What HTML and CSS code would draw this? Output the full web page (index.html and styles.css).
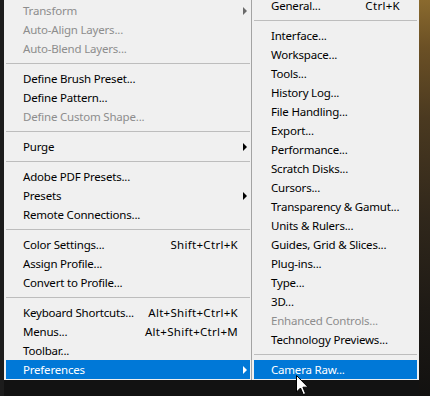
FILE: index.html
```html
<!DOCTYPE html>
<html>
<head>
<meta charset="utf-8">
<link rel="stylesheet" href="styles.css">
</head>
<body>
<div class="scene">
  <div class="menu main">
    <div class="item disabled"><span class="label">Transform</span><span class="tail"><i class="arrow"></i></span></div>
    <div class="item disabled"><span class="label">Auto-Align Layers...</span><span class="tail"></span></div>
    <div class="item disabled"><span class="label">Auto-Blend Layers...</span><span class="tail"></span></div>
    <div class="sep"></div>
    <div class="item"><span class="label">Define Brush Preset...</span><span class="tail"></span></div>
    <div class="item"><span class="label">Define Pattern...</span><span class="tail"></span></div>
    <div class="item disabled"><span class="label">Define Custom Shape...</span><span class="tail"></span></div>
    <div class="sep"></div>
    <div class="item"><span class="label">Purge</span><span class="tail"><i class="arrow"></i></span></div>
    <div class="sep"></div>
    <div class="item"><span class="label">Adobe PDF Presets...</span><span class="tail"></span></div>
    <div class="item"><span class="label">Presets</span><span class="tail"><i class="arrow"></i></span></div>
    <div class="item"><span class="label">Remote Connections...</span><span class="tail"></span></div>
    <div class="sep"></div>
    <div class="item"><span class="label">Color Settings...</span><span class="key">Shift+Ctrl+K</span><span class="tail"></span></div>
    <div class="item"><span class="label">Assign Profile...</span><span class="tail"></span></div>
    <div class="item"><span class="label">Convert to Profile...</span><span class="tail"></span></div>
    <div class="sep"></div>
    <div class="item"><span class="label">Keyboard Shortcuts...</span><span class="key">Alt+Shift+Ctrl+K</span><span class="tail"></span></div>
    <div class="item"><span class="label">Menus...</span><span class="key">Alt+Shift+Ctrl+M</span><span class="tail"></span></div>
    <div class="item"><span class="label">Toolbar...</span><span class="tail"></span></div>
    <div class="item active"><span class="label">Preferences</span><span class="tail"><i class="arrow"></i></span></div>
  </div>
  <div class="menu submenu">
    <div class="item"><span class="label">General...</span><span class="key">Ctrl+K</span></div>
    <div class="sep"></div>
    <div class="item"><span class="label">Interface...</span></div>
    <div class="item"><span class="label">Workspace...</span></div>
    <div class="item"><span class="label">Tools...</span></div>
    <div class="item"><span class="label">History Log...</span></div>
    <div class="item"><span class="label">File Handling...</span></div>
    <div class="item"><span class="label">Export...</span></div>
    <div class="item"><span class="label">Performance...</span></div>
    <div class="item"><span class="label">Scratch Disks...</span></div>
    <div class="item"><span class="label">Cursors...</span></div>
    <div class="item"><span class="label">Transparency &amp; Gamut...</span></div>
    <div class="item"><span class="label">Units &amp; Rulers...</span></div>
    <div class="item"><span class="label">Guides, Grid &amp; Slices...</span></div>
    <div class="item"><span class="label">Plug-ins...</span></div>
    <div class="item"><span class="label">Type...</span></div>
    <div class="item"><span class="label">3D...</span></div>
    <div class="item disabled"><span class="label">Enhanced Controls...</span></div>
    <div class="item"><span class="label">Technology Previews...</span></div>
    <div class="sep"></div>
    <div class="item active"><span class="label">Camera Raw...</span></div>
  </div>
  <div class="backdrop"></div>
  <svg class="cursor" width="13" height="21" viewBox="0 0 13 21">
    <path d="M0.5 0.5 L0.5 17 L4.5 13 L7.3 19.6 L9.6 18.6 L6.9 12.2 L12 12.2 Z" fill="#fff" stroke="#000" stroke-width="1" stroke-linejoin="miter"/>
  </svg>
</div>
</body>
</html>
```

FILE: styles.css
```css
html, body {
  margin: 0;
  padding: 0;
}
body {
  width: 430px;
  height: 396px;
  overflow: hidden;
  background: #161616;
}
.scene {
  position: relative;
  display: flex;
  align-items: flex-start;
  width: 430px;
  height: 396px;
  padding-left: 4px;
  box-sizing: border-box;
  background: linear-gradient(90deg, #1c1c1c 0, #1c1c1c 4px, transparent 4px),
              linear-gradient(180deg, transparent 0, transparent 380px, #121212 380px);
  font-family: "Noto Sans", "Open Sans", sans-serif;
  font-size: 11.5px;
  letter-spacing: -0.2px;
  color: #000;
}
.menu {
  background: #f0f0f0;
  display: flex;
  flex-direction: column;
  padding-top: 1px;
  padding-bottom: 1px;
}
.main {
  width: 247px;
  box-sizing: border-box;
  padding-left: 2px;
  padding-right: 1px;
}
.submenu {
  width: 168px;
  box-sizing: border-box;
  margin-top: -5px;
  border-left: 1px solid #a3a3a3;
  padding-left: 2px;
  padding-right: 2px;
}
.item {
  height: 19px;
  display: flex;
  align-items: center;
  padding-left: 17px;
  white-space: nowrap;
  line-height: 19px;
}
.submenu .item {
  padding-right: 17px;
}
.label {
  flex: 1;
}
.key {
  text-align: right;
  letter-spacing: 0.3px;
}
.tail {
  width: 12px;
  height: 19px;
  display: flex;
  align-items: center;
  justify-content: flex-end;
  padding-right: 3px;
  box-sizing: border-box;
}
.arrow {
  display: block;
  width: 0;
  height: 0;
  border-left: 4px solid #000;
  border-top: 4px solid transparent;
  border-bottom: 4px solid transparent;
}
.disabled {
  color: #8d8d8d;
}
.disabled .arrow {
  border-left-color: #6a6a6a;
}
.active {
  background: #0078d7;
  color: #fff;
}
.active .arrow {
  border-left-color: #fff;
}
.sep {
  height: 1px;
  margin: 5px 0;
  background: #bdbdbd;
}
.backdrop {
  flex: 1;
  align-self: stretch;
  background: linear-gradient(180deg, #8a6a2e 0, #6b5025 12%, #4a3920 30%, #30271b 55%, #1e1a15 78%, #121110 100%);
}
.cursor {
  position: absolute;
  left: 296px;
  top: 375px;
}
```
